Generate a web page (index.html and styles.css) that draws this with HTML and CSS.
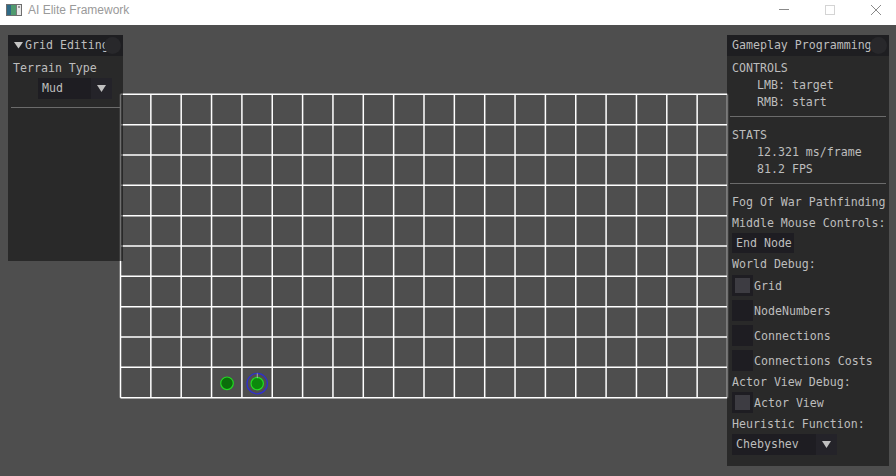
FILE: index.html
```html
<!DOCTYPE html>
<html>
<head>
<meta charset="utf-8">
<title>AI Elite Framework</title>
<link rel="stylesheet" href="styles.css">
</head>
<body>
<header class="titlebar">
  <svg class="app-icon" width="16" height="12" viewBox="0 0 16 12">
    <rect x="0.5" y="0.5" width="15" height="11" fill="#f4f4f4" stroke="#6e6e6e"/>
    <rect x="1" y="1" width="4" height="10" fill="#2f6a86"/>
    <rect x="5" y="1" width="5" height="10" fill="#4f9a6e"/>
    <rect x="10" y="1" width="1" height="10" fill="#7a7a7a"/>
    <rect x="11" y="1" width="4" height="10" fill="#e8e8e8"/>
    <rect x="12" y="2" width="2" height="2" fill="#9a9a9a"/>
  </svg>
  <span class="app-title">AI Elite Framework</span>
  <div class="caption">
    <span class="cap"><svg width="10" height="10" viewBox="0 0 10 10"><line x1="0" y1="4.5" x2="10" y2="4.5" stroke="#8a8a8a" stroke-width="1"/></svg></span>
    <span class="cap"><svg width="10" height="10" viewBox="0 0 10 10"><rect x="0.5" y="0.5" width="9" height="9" fill="none" stroke="#d4d4d4" stroke-width="1"/></svg></span>
    <span class="cap"><svg width="10" height="10" viewBox="0 0 10 10"><path d="M0 0 L10 10 M10 0 L0 10" stroke="#8a8a8a" stroke-width="1"/></svg></span>
  </div>
</header>

<main class="canvas">
  <svg class="world" width="896" height="451" viewBox="0 25 896 451">
    <g stroke="#ffffff" stroke-width="1.5" fill="none">
      <path d="M120.5 94.3V397.7M150.85 94.3V397.7M181.2 94.3V397.7M211.55 94.3V397.7M241.9 94.3V397.7M272.25 94.3V397.7M302.6 94.3V397.7M332.95 94.3V397.7M363.3 94.3V397.7M393.65 94.3V397.7M424 94.3V397.7M454.35 94.3V397.7M484.7 94.3V397.7M515.05 94.3V397.7M545.4 94.3V397.7M575.75 94.3V397.7M606.1 94.3V397.7M636.45 94.3V397.7M666.8 94.3V397.7M697.15 94.3V397.7M727.5 94.3V397.7"/>
      <path d="M120.5 94.3H727.5M120.5 124.64H727.5M120.5 154.98H727.5M120.5 185.32H727.5M120.5 215.66H727.5M120.5 246H727.5M120.5 276.34H727.5M120.5 306.68H727.5M120.5 337.02H727.5M120.5 367.36H727.5M120.5 397.7H727.5"/>
    </g>
    <circle cx="227" cy="383.3" r="6.3" fill="#0a6e0a" stroke="#23d823" stroke-width="1.2"/>
    <circle cx="257.2" cy="383.6" r="10.2" fill="none" stroke="#2f2fcf" stroke-width="1.3"/>
    <circle cx="257.2" cy="383.6" r="6.2" fill="#0c8a0c" stroke="#23e023" stroke-width="1.2"/>
    <line x1="257.3" y1="373.4" x2="257.3" y2="378.2" stroke="#a8a8a8" stroke-width="1"/>
  </svg>

  <section class="win win-left">
    <div class="win-title">
      <svg class="collapse-arrow" width="9" height="7" viewBox="0 0 9 7"><polygon points="0,0 9,0 4.5,6.5" fill="#c4c4c4"/></svg>
      <span class="title-text title-clip">Grid Editing</span>
      <span class="title-btn"></span>
    </div>
    <div class="win-body">
      <div class="row">Terrain Type</div>
      <div class="combo combo-mud indent-box">
        <span class="combo-text">Mud</span>
        <span class="combo-arrow"><svg width="9" height="7" viewBox="0 0 9 7"><polygon points="0,0 9,0 4.5,7" fill="#c0c0c0"/></svg></span>
      </div>
      <div class="sep sep-tight"></div>
    </div>
  </section>

  <section class="win win-right">
    <div class="win-title">
      <span class="title-text title-plain">Gameplay Programming</span>
      <span class="title-btn"></span>
    </div>
    <div class="win-body">
      <div class="row">CONTROLS</div>
      <div class="row indent">LMB: target</div>
      <div class="row indent">RMB: start</div>
      <div class="sep"></div>
      <div class="row">STATS</div>
      <div class="row indent">12.321 ms/frame</div>
      <div class="row indent">81.2 FPS</div>
      <div class="sep"></div>
      <div class="row">Fog Of War Pathfinding</div>
      <div class="row gap-4">Middle Mouse Controls:</div>
      <div class="btn">End Node</div>
      <div class="row gap-3">World Debug:</div>
      <div class="check gap-2"><span class="box"><span class="mark"></span></span><span class="check-label">Grid</span></div>
      <div class="check gap-4"><span class="box"></span><span class="check-label">NodeNumbers</span></div>
      <div class="check gap-4"><span class="box"></span><span class="check-label">Connections</span></div>
      <div class="check gap-4"><span class="box"></span><span class="check-label">Connections Costs</span></div>
      <div class="row gap-3">Actor View Debug:</div>
      <div class="check gap-1"><span class="box"><span class="mark"></span></span><span class="check-label">Actor View</span></div>
      <div class="row gap-25">Heuristic Function:</div>
      <div class="combo combo-heur">
        <span class="combo-text">Chebyshev</span>
        <span class="combo-arrow"><svg width="9" height="7" viewBox="0 0 9 7"><polygon points="0,0 9,0 4.5,7" fill="#c0c0c0"/></svg></span>
      </div>
    </div>
  </section>
</main>
</body>
</html>
```

FILE: styles.css
```css
* {
  box-sizing: border-box;
  margin: 0;
  padding: 0;
}

html, body {
  width: 896px;
  height: 476px;
  overflow: hidden;
}

body {
  background: #4e4e4e;
  font-family: "DejaVu Sans Mono", "Liberation Mono", monospace;
}

/* ---------- OS title bar ---------- */
.titlebar {
  height: 25px;
  background: #ffffff;
  display: flex;
  align-items: flex-start;
}

.app-icon {
  flex: none;
  margin: 4px 0 0 6px;
}

.app-title {
  margin-left: 6px;
  font-family: "Liberation Sans", Arial, sans-serif;
  font-size: 12px;
  line-height: 20px;
  color: #9a9a9a;
}

.caption {
  display: flex;
  margin-left: auto;
  margin-right: -3px;
}

.cap {
  width: 46px;
  height: 19px;
  display: flex;
  align-items: center;
  justify-content: center;
}

/* ---------- app canvas ---------- */
.canvas {
  position: relative;
  height: 451px;
}

.world {
  position: absolute;
  left: 0;
  top: 0;
}

/* ---------- ImGui windows ---------- */
.win {
  position: absolute;
  top: 10px;
  background: rgba(16, 16, 16, 0.6);
  color: #bdbdbd;
  font-size: 11.6px;
}

.win-left {
  left: 8px;
  width: 115px;
  height: 226px;
}

.win-right {
  left: 727px;
  width: 162px;
  height: 431px;
}

.win-title {
  position: relative;
  height: 21px;
  display: flex;
  align-items: center;
  background: #1e1e21;
  white-space: nowrap;
}

.collapse-arrow {
  flex: none;
  margin-left: 6px;
}

.title-text {
  line-height: 21px;
}

.title-plain {
  padding-left: 5px;
}

.title-clip {
  margin-left: 2px;
  width: 82px;
  overflow: hidden;
}

.title-btn {
  position: absolute;
  right: 2px;
  top: 2px;
  width: 17px;
  height: 17px;
  border-radius: 50%;
  background: #28282b;
}

.win-body {
  padding: 3.5px 5px 0;
}

.row {
  height: 17px;
  line-height: 17px;
  white-space: nowrap;
}

.indent {
  padding-left: 25px;
}

.indent-box {
  margin-left: 25px;
}

.gap-1 { margin-top: 1px; }
.gap-2 { margin-top: 2px; }
.gap-3 { margin-top: 3px; }
.gap-4 { margin-top: 4px; }
.gap-25 { margin-top: 2.5px; }

.sep {
  height: 1px;
  background: #6b6b6b;
  margin: 5px -2px 10px;
}

.sep-tight {
  margin-top: 8px;
}

.btn {
  width: 62px;
  height: 20px;
  margin-top: 1.5px;
  padding-left: 4px;
  line-height: 21px;
  background: #1e1d22;
  white-space: nowrap;
}

.check {
  height: 21px;
  display: flex;
  align-items: center;
}

.box {
  flex: none;
  width: 21px;
  height: 21px;
  padding: 3px;
  background: #1e1d22;
}

.mark {
  display: block;
  width: 15px;
  height: 15px;
  background: #3d3c42;
}

.check-label {
  margin-left: 1px;
  white-space: nowrap;
}

.combo {
  display: flex;
  height: 21px;
  margin-top: 1.5px;
  background: #1e1d22;
}

.combo-mud {
  width: 74px;
}

.combo-heur {
  width: 105px;
}

.combo-text {
  flex: 1;
  padding-left: 4px;
  line-height: 21px;
  white-space: nowrap;
}

.combo-arrow {
  flex: none;
  width: 21px;
  display: flex;
  align-items: center;
  justify-content: center;
  background: #242329;
}
```
